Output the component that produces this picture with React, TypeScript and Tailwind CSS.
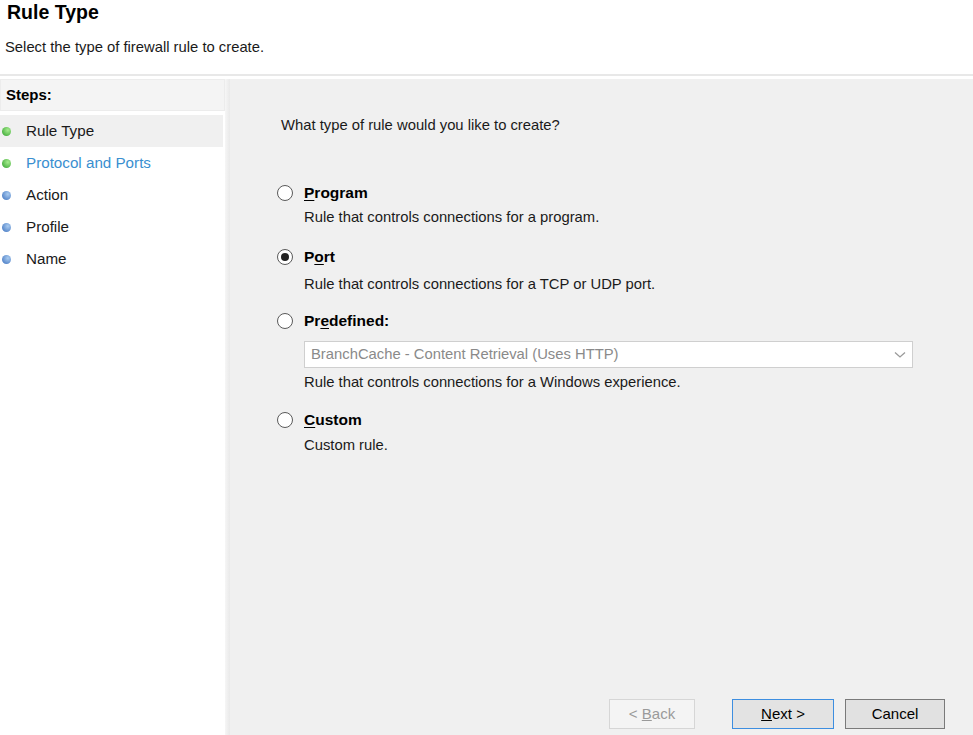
import React from 'react';

const font = { fontFamily: '"Liberation Sans", Arial, sans-serif' };

function Dot({ done }: { done: boolean }) {
  return (
    <span
      className={`inline-block w-[9px] h-[9px] rounded-full shrink-0 ${
        done
          ? 'bg-[radial-gradient(circle_at_65%_35%,#a6ec8e,#2e9f2a)]'
          : 'bg-[radial-gradient(circle_at_65%_35%,#a9cbf0,#3a6fbd)]'
      }`}
    />
  );
}

function Radio({ checked }: { checked?: boolean }) {
  return (
    <span className="w-[16px] h-[16px] rounded-full border border-[#5a5a5a] bg-white flex items-center justify-center shrink-0">
      {checked && <span className="w-[8px] h-[8px] rounded-full bg-[#222]" />}
    </span>
  );
}

function Option({
  label,
  ul,
  desc,
  checked,
  descGap,
  children,
}: {
  label: string;
  ul: number;
  desc: string;
  checked?: boolean;
  descGap: string;
  children?: React.ReactNode;
}) {
  return (
    <div>
      <div className="flex items-center gap-[11px] h-[20px]">
        <Radio checked={checked} />
        <span className="text-[15.5px] font-bold text-black">
          {label.slice(0, ul)}
          <span className="underline underline-offset-2">{label[ul]}</span>
          {label.slice(ul + 1)}
        </span>
      </div>
      <div className="pl-[27px]">
        {children}
        <div className={`text-[14.8px] leading-[20px] h-[20px] text-[#1a1a1a] ${descGap}`}>{desc}</div>
      </div>
    </div>
  );
}

export default function App() {
  const steps = [
    { name: 'Rule Type', done: true, active: true },
    { name: 'Protocol and Ports', done: true, link: true },
    { name: 'Action', done: false },
    { name: 'Profile', done: false },
    { name: 'Name', done: false },
  ];
  return (
    <div className="w-[973px] h-[735px] bg-white flex flex-col overflow-hidden" style={font}>
      <header className="h-[76px] border-b-2 border-[#e8e8e8] px-[7px]">
        <h1 className="text-[19.5px] font-bold text-black leading-[24px]">Rule Type</h1>
        <p className="text-[14.8px] leading-[20px] text-[#1a1a1a] mt-[13px] -ml-[2px]">
          Select the type of firewall rule to create.
        </p>
      </header>
      <div className="flex flex-1 min-h-0 pt-[3px]">
        <aside className="w-[225px] shrink-0 bg-white flex flex-col">
          <div className="h-[32px] bg-[#f4f4f4] border border-[#ececec] flex items-center px-[5px] text-[15px] font-bold text-black">
            Steps:
          </div>
          <ul className="pt-[4px]">
            {steps.map((s) => (
              <li
                key={s.name}
                className={`h-[32px] w-[223px] flex items-center gap-[15px] pl-[2px] text-[15.2px] ${
                  s.active ? 'bg-[#f0f0f0]' : ''
                } ${s.link ? 'text-[#3a8fd0]' : 'text-[#1a1a1a]'}`}
              >
                <Dot done={s.done} />
                {s.name}
              </li>
            ))}
          </ul>
        </aside>
        <div className="w-[5px] shrink-0 bg-gradient-to-r from-[#f6f6f6] to-[#e9e9e9]" />
        <main className="flex-1 bg-[#f0f0f0] flex flex-col pl-[47px] pr-[28px]">
          <p className="text-[14.8px] leading-[20px] text-[#1a1a1a] mt-[36px] pl-[4px]">
            What type of rule would you like to create?
          </p>
          <div className="mt-[48px] flex flex-col">
            <Option label="Program" ul={0} descGap="mt-[4px]" desc="Rule that controls connections for a program." />
            <div className="mt-[20px]">
              <Option
                label="Port"
                ul={1}
                checked
                descGap="mt-[7px]"
                desc="Rule that controls connections for a TCP or UDP port."
              />
            </div>
            <div className="mt-[17px]">
              <Option
                label="Predefined:"
                ul={2}
                descGap="mt-[4px]"
                desc="Rule that controls connections for a Windows experience."
              >
                <div className="mt-[10px] h-[27px] w-[609px] bg-white border border-[#cfcfcf] flex items-center justify-between px-[6px] text-[14.8px] text-[#8a8a8a]">
                  <span>BranchCache - Content Retrieval (Uses HTTP)</span>
                  <svg width="12" height="8" viewBox="0 0 12 8" fill="none">
                    <path d="M1 1.5 L6 6 L11 1.5" stroke="#9a9a9a" strokeWidth="1.3" />
                  </svg>
                </div>
              </Option>
            </div>
            <div className="mt-[18px]">
              <Option label="Custom" ul={0} descGap="mt-[5px]" desc="Custom rule." />
            </div>
          </div>
          <div className="mt-auto mb-[6px] flex justify-end">
            <button className="w-[86px] h-[30px] border border-[#d6d6d6] bg-[#f4f4f4] text-[15px] text-[#9a9a9a]">
              &lt; <span className="underline">B</span>ack
            </button>
            <button className="w-[102px] h-[30px] border border-[#3d8ee0] bg-[#e3e3e3] text-[15px] text-black ml-[37px]">
              <span className="underline">N</span>ext &gt;
            </button>
            <button className="w-[100px] h-[30px] border border-[#7a7a7a] bg-[#e1e1e1] text-[15px] text-black ml-[11px]">
              Cancel
            </button>
          </div>
        </main>
      </div>
    </div>
  );
}
